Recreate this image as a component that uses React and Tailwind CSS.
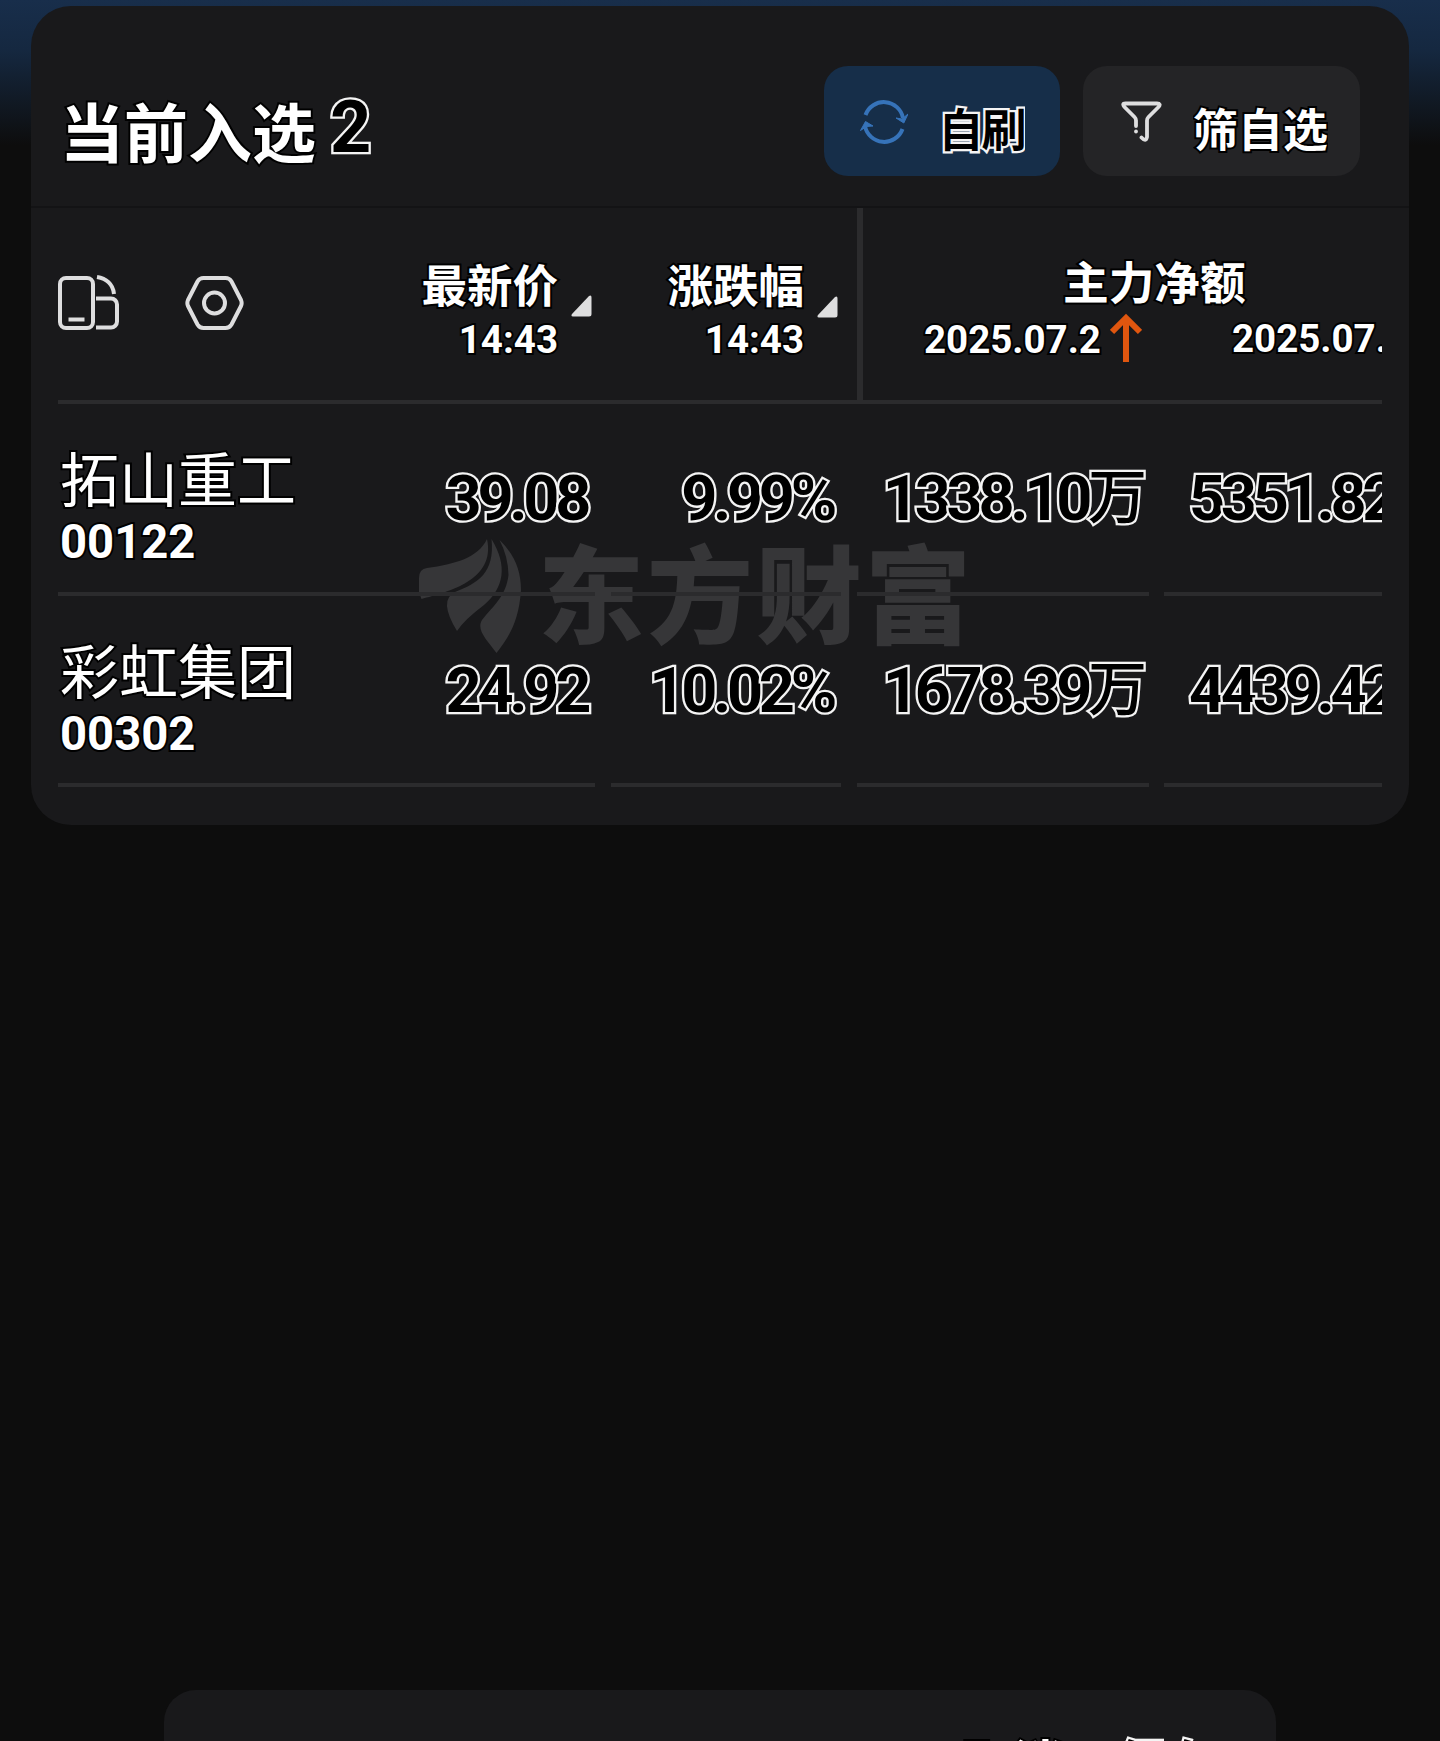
import React from 'react';

const stocks = [
  { name: '拓山重工', code: '00122', price: '39.08', change: '9.99%', net: '1338.10', prev: '5351.82' },
  { name: '彩虹集团', code: '00302', price: '24.92', change: '10.02%', net: '1678.39', prev: '4439.42' },
];

function SwitchIcon() {
  return (
    <svg className="w-[62px] h-[56px]" viewBox="0 0 62 56" fill="none" stroke="#dededf" strokeWidth="4">
      <rect x="2" y="3" width="33" height="50" rx="6" />
      <path d="M10.5 44.5H26.5" />
      <path d="M39 2C48 3.500 55 9 56 19" />
      <path d="M38 23.500H53A6 6 0 0 1 59 29.500V46.500A6 6 0 0 1 53 52.500H38" />
    </svg>
  );
}

function SettingIcon() {
  return (
    <svg className="w-[60px] h-[56px]" viewBox="0 0 60 56" fill="none" stroke="#dededf" strokeWidth="4">
      <path d="M19.500 3H41.500Q45.500 3 47.500 6.500L57 25Q58.300 28 57 31L47.500 49.500Q45.500 53 41.500 53H19.500Q15.500 53 13.500 49.500L4 31Q2.700 28 4 25L13.500 6.500Q15.500 3 19.500 3Z" strokeLinejoin="round" />
      <circle cx="30.500" cy="28" r="10.500" />
    </svg>
  );
}

function RefreshIcon() {
  return (
    <svg className="w-[48px] h-[44px]" viewBox="0 0 48 44" fill="none" stroke="#3673b9" strokeWidth="4">
      <path d="M5.500 15A19.500 19.500 0 0 1 43 18" />
      <path d="M42.500 29A19.500 19.500 0 0 1 5 26" />
      <path d="M36 18L42 19L48 14L43.800 23Z" fill="#3673b9" stroke="#3673b9" strokeWidth="1" />
      <path d="M0.500 30.500L5.500 21.500L13 26L6.500 26.500Z" fill="#3673b9" stroke="#3673b9" strokeWidth="1" />
    </svg>
  );
}

function FilterIcon() {
  return (
    <svg className="w-[41px] h-[42px]" viewBox="0 0 41 42" fill="none" stroke="#dededf" strokeWidth="3.800" strokeLinecap="round" strokeLinejoin="round">
      <path d="M15 25V19.500Q15 17.500 13.500 16L3.500 6Q0.500 2.500 4.500 2.500H36Q40.500 2.500 37.500 6L27.500 16Q26 17.500 26 19.500V36Q25 41.500 20.500 36.500" />
      <path d="M15 30.500V30.600" />
    </svg>
  );
}

function SortMark() {
  return (
    <svg className="w-[21px] h-[22px]" viewBox="0 0 21 22" fill="#dededf">
      <path d="M18 1Q20.500 -0.500 20.500 2.500V19Q20.500 21.500 18 21.500H2Q-0.500 21.500 1 19Z" />
    </svg>
  );
}

// one span per character, so that each outline covers the character before it
function Outlined({ text, unit, className = '' }) {
  return (
    <span className={`font-bold text-black whitespace-nowrap [-webkit-text-stroke:4.600px_#f4f4f4] [paint-order:stroke_fill] ${className}`}>
      {[...text].map((ch, i) => <span key={i}>{ch}</span>)}
      {unit && <span className="align-[2px] text-[59px] leading-[60px] tracking-normal font-medium">{unit}</span>}
    </span>
  );
}

function HeadCell({ title }) {
  return (
    <div className="flex flex-col items-end">
      <span className="text-[45.500px] leading-[60px] font-bold">{title}</span>
      <span className="mt-[2px] text-[38.500px] leading-[40px] font-bold">14:43</span>
    </div>
  );
}

export default function App() {
  return (
    <div className="w-[1440px] h-[1741px] overflow-hidden flex flex-col bg-[#0d0d0d] bg-[linear-gradient(180deg,#182e4b_0px,#152840_50px,#0d0d0d_145px)] pt-[6px] text-white font-[Roboto,'Noto_Sans_CJK_SC',sans-serif]">
      <div className="relative mx-[31px] h-[819px] rounded-[40px] bg-[#19191b] shrink-0">
        {/* Title bar */}
        <div className="h-[200px] flex items-start pl-[29px] pr-[49px]">
          <h1 className="mt-[85px] text-[64px] leading-[90px] font-bold [-webkit-text-stroke:4px_black] [paint-order:stroke_fill]">当前入选</h1>
          <Outlined text="2" className="mt-[80px] ml-[14px] text-[72px] leading-[84px]" />
          <div className="ml-auto mt-[60px] flex gap-[23px]">
            <button className="w-[236px] h-[110px] rounded-[24px] bg-[#162e49] flex items-start pl-[36px]">
              <div className="mt-[34px]"><RefreshIcon /></div>
              <Outlined text="自刷" className="ml-[30px] mt-[34px] w-[87px] overflow-hidden text-[45px] leading-[64px] tracking-[-2px]" />
            </button>
            <button className="w-[277px] h-[110px] rounded-[24px] bg-[#242426] flex items-start pl-[38px]">
              <div className="mt-[35px]"><FilterIcon /></div>
              <span className="ml-[31px] mt-[34px] w-[135px] overflow-hidden whitespace-nowrap text-[45px] leading-[64px] font-bold [-webkit-text-stroke:4px_black] [paint-order:stroke_fill]">筛自选</span>
            </button>
          </div>
        </div>
        <div className="h-[2px] bg-[#131315]" />

        {/* Watermark */}
        <div className="absolute left-[388px] top-[532px] flex items-start text-[#363638]">
          <svg className="w-[103px] h-[116px]" viewBox="419 538 103 116" fill="#363638">
            <path d="M487 539C478 558 455 564 427 568Q419 569 419 578V592L421.500 599C448 592 496 580 487 539Z" />
            <path d="M491.500 539C508 566 504 588 484 605Q464 620 457 631Q438 600 455 592C478 583 495 573 491.500 539Z" />
            <path d="M499.500 540C514 554 521 570 521 590C519 620 510 636 496.500 653C487 640 476 630 482 620C494 605 506 596 508.500 575Q508 556 499.500 540Z" />
          </svg>
          <span className="ml-[16px] -mt-[9px] text-[106px] leading-[140px] tracking-[3px] font-black whitespace-nowrap">东方财富</span>
        </div>

        <div className="relative ml-[27px] w-[1324px] overflow-hidden [-webkit-text-stroke:4px_black] [paint-order:stroke_fill]">
          {/* Table head */}
          <div className="flex h-[192px]">
            <div className="w-[799px] shrink-0 flex items-start">
              <div className="flex gap-[64px] mt-[67px]">
                <SwitchIcon />
                <SettingIcon />
              </div>
              <div className="flex ml-auto mt-[50px]">
                <HeadCell title="最新价" />
                <div className="ml-[13px] mt-[37px]"><SortMark /></div>
                <div className="ml-[75.500px]"><HeadCell title="涨跌幅" /></div>
                <div className="ml-[13px] mt-[38px]"><SortMark /></div>
                <div className="w-[19px]" />
              </div>
            </div>
            <div className="w-[6px] shrink-0 bg-[#2b2b2d]" />
            <div className="flex-1 min-w-0 pt-[49px]">
              <div className="ml-[200px] text-[45.700px] leading-[56px] font-bold">主力净额</div>
              <div className="mt-px flex items-start whitespace-nowrap text-[38.500px] leading-[40px] font-bold">
                <span className="mt-[6px] ml-[61px]">2025.07.2</span>
                <svg className="-mt-[1px] ml-[9px] w-[32px] h-[50px] shrink-0" viewBox="0 0 32 50" fill="none" stroke="#e0560f" strokeWidth="6">
                  <path d="M16 49V5" />
                  <path d="M2 19L16 5L30 19" />
                </svg>
                <span className="mt-[5px] ml-[90px]">2025.07.</span>
              </div>
            </div>
          </div>
          <div className="h-[4px] bg-[#2b2b2d]" />

          {/* Rows */}
          {stocks.map((s) => (
            <div key={s.code} className="grid grid-cols-[537px_230px_292px_217px] gap-x-4 h-[191.500px] text-[63px] leading-[80px]">
              <div className="flex justify-between border-b-4 border-[#2b2b2d]">
                <div className="pt-[38px] pl-[2px]">
                  <div className="text-[59px] leading-[80px] font-normal">{s.name}</div>
                  <div className="-mt-[2px] text-[47.200px] leading-[44px] font-bold">{s.code}</div>
                </div>
                <Outlined text={s.price} className="mt-[55px] mr-[8px] tracking-[-4.300px]" />
              </div>
              <div className="flex justify-end border-b-4 border-[#2b2b2d]">
                <Outlined text={s.change} className="mt-[55px] mr-[8px] tracking-[-4.300px]" />
              </div>
              <div className="flex justify-end border-b-4 border-[#2b2b2d]">
                <Outlined text={s.net} unit="万" className="mt-[55px] mr-[2px] tracking-[-4.300px]" />
              </div>
              <div className="-ml-px flex overflow-hidden border-b-4 border-[#2b2b2d] pl-[25px]">
                <Outlined text={s.prev} className="mt-[55px] tracking-[-4.300px]" />
              </div>
            </div>
          ))}
        </div>
      </div>

      {/* Toast */}
      <div className="mt-[865px] ml-[164px] w-[1112px] h-[120px] shrink-0 rounded-t-[32px] bg-[#19191b] flex items-start text-[50px] leading-[72px]">
        <span className="ml-[799px] mt-[39px] font-bold [-webkit-text-stroke:4px_black] [paint-order:stroke_fill]">取消</span>
        <Outlined text="保存" className="ml-[53px] mt-[39px]" />
      </div>
    </div>
  );
}
